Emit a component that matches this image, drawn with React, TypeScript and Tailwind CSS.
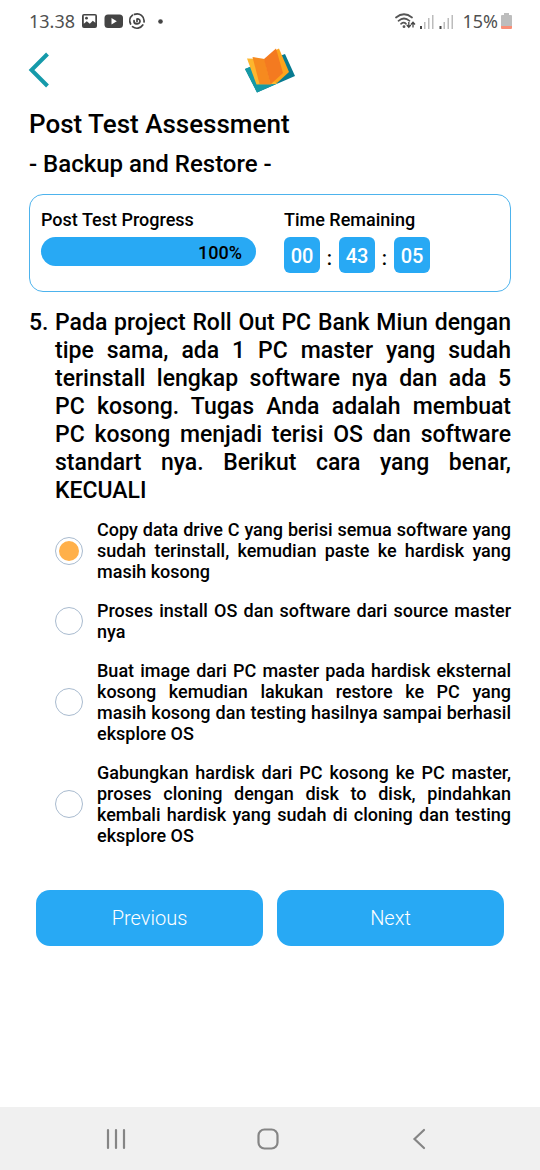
import { useState } from "react";

const options = [
  "Copy data drive C yang berisi semua software yang sudah terinstall, kemudian paste ke hardisk yang masih kosong",
  "Proses install OS dan software dari source master nya",
  "Buat image dari PC master pada hardisk eksternal kosong kemudian lakukan restore ke PC yang masih kosong dan testing hasilnya sampai berhasil eksplore OS",
  "Gabungkan hardisk dari PC kosong ke PC master, proses cloning dengan disk to disk, pindahkan kembali hardisk yang sudah di cloning dan testing eksplore OS",
];

function StatusBar() {
  return (
    <div className="flex h-10 items-center justify-between pt-px pl-[29px] pr-7 font-['Noto_Sans',sans-serif] text-lg leading-6 font-normal text-[#505050]">
      <div className="flex items-center">
        <span className="w-[51px]">13.38</span>
        <svg width="88" height="18" viewBox="0 0 88 18" aria-hidden="true">
          <path
            fillRule="evenodd"
            fill="#444"
            d="M4 2h11a2 2 0 0 1 2 2v10a2 2 0 0 1-2 2H4a2 2 0 0 1-2-2V4a2 2 0 0 1 2-2ZM3.800 3.600v8.200l3-2.500 3 2.500 3-3 2.500 2V3.600Z"
          />
          <circle cx="6.500" cy="6.200" r="1.400" fill="#444" />
          <rect x="24.500" y="2.500" width="18.500" height="13.500" rx="3.500" fill="#444" />
          <path d="M31.500 6v6.400l5.300-3.200Z" fill="#fff" />
          <g fill="none" stroke="#444" strokeWidth="1.700" strokeLinecap="round">
            <path d="M54.500 2.400A7 7 0 0 1 64 10" />
            <path d="M62.800 13A7 7 0 0 1 52.500 14.700" />
            <path d="M50.600 12A7 7 0 0 1 52.500 3.200" />
            <path d="M54 8.500a3 3 0 0 0 6 .8a2.300 2.300 0 0 0-3-2.200v2.600" />
          </g>
          <circle cx="80.500" cy="9.500" r="2.300" fill="#444" />
        </svg>
      </div>
      <div className="flex items-center gap-1">
        <svg width="60" height="20" viewBox="0 0 60 20" aria-hidden="true">
          <g fill="none" stroke="#555" strokeWidth="1.700" strokeLinecap="round">
            <path d="M2 6.500q8-6.500 16 0M4.500 9.800q5.500-4.600 11 0M7 12.800q2.800-2.200 5 0" />
          </g>
          <circle cx="10" cy="15.700" r="1.400" fill="#555" />
          <path
            d="M14.800 11v5m-2-2 2 2.200 2-2.200M19 16.500v-5m-2 2 2-2.200 2 2.200"
            fill="none"
            stroke="#444"
            strokeWidth="1.300"
          />
          <path d="M26 15h2v3h-2zM45.500 15h2v3h-2z" fill="#444" />
          <path
            d="M30 11h1.500v7H30zM34 7h1.500v11H34zM38 4h1.500v14H38zM49.500 11H51v7h-1.500zM53.500 7H55v11h-1.500zM57.500 4H59v14h-1.500z"
            fill="#bcbcbc"
          />
        </svg>
        <div className="flex items-center gap-[3px] pl-1">
          <span>15%</span>
          <svg width="11" height="18" viewBox="0 0 11 18" aria-hidden="true">
            <path d="M3 1h5v2h2q1 0 1 1v10H0V4q0-1 1-1h2Z" fill="#bdbdbd" />
            <path d="M0 14h11v2q0 1-1 1H1q-1 0-1-1Z" fill="#f98f77" />
          </svg>
        </div>
      </div>
    </div>
  );
}

function BookLogo() {
  return (
    <svg width="52" height="46" viewBox="0 0 52 46" role="img" aria-label="Open book">
      <path d="m1 22 12 23.500 38-16.500L41 7Z" fill="#087b91" />
      <path d="m1 22 12 23.500 20-9L10 18Z" fill="#1599a5" />
      <path d="m3 11.500 9.500 26 20.500-.5L20 12Z" fill="#fdb62e" />
      <path d="m30 4 5-2.500L45 25l-12 11-8-4Z" fill="#fda41c" />
      <path d="m8.500 10 12 2 6 25.500-11-.5Z" fill="#f68a1f" />
      <path d="m20 12 12-10.500L39 26 26.500 37.500Z" fill="#f47a20" />
    </svg>
  );
}

function TimeBox({ value }: { value: string }) {
  return (
    <span className="flex h-9 w-9 items-center justify-center rounded-md bg-[#28a9f4] pt-[2px] text-xl font-medium text-white">
      {value}
    </span>
  );
}

export default function App() {
  const [selected, setSelected] = useState(0);

  return (
    <div className="flex min-h-screen flex-col bg-white font-[Roboto,sans-serif] font-[480] text-black">
      <StatusBar />
      <header className="grid h-15 grid-cols-[1fr_auto_1fr] items-center px-7">
        <button type="button" aria-label="Back" className="w-6">
          <svg width="22" height="36" viewBox="0 0 22 36" aria-hidden="true">
            <path d="M19.500 2 3.500 18l16 16" fill="none" stroke="#159aaa" strokeWidth="4" />
          </svg>
        </button>
        <BookLogo />
      </header>

      <main className="px-[29px] pt-1">
        <h1 className="text-[26px] leading-10">Post Test Assessment</h1>
        <h2 className="text-2xl leading-10">- Backup and Restore -</h2>

        <section className="mt-[10px] grid grid-cols-2 gap-7 rounded-[14px] border border-[#4db3ed] px-[11px] pt-[13px] pb-[18px]">
          <div>
            <h3 className="text-lg leading-6">Post Test Progress</h3>
            <div
              role="progressbar"
              aria-label="Post Test Progress"
              aria-valuenow={100}
              className="mt-[5px] flex h-[29px] items-center justify-end rounded-full bg-[#28a9f4] pt-[2px] pr-[14px] text-lg"
            >
              100%
            </div>
          </div>
          <div>
            <h3 className="text-lg leading-6">Time Remaining</h3>
            <div className="mt-[5px] flex items-center text-xl">
              <TimeBox value="00" />
              <span className="w-[19px] pt-[6px] text-center">:</span>
              <TimeBox value="43" />
              <span className="w-[19px] pt-[6px] text-center">:</span>
              <TimeBox value="05" />
            </div>
          </div>
        </section>

        <form>
          <fieldset>
            <legend className="flex pt-[17px] text-[23px] leading-7">
              <span className="w-[26px] shrink-0">5.</span>
              <span className="text-justify">
                Pada project Roll Out PC Bank Miun dengan tipe sama, ada 1 PC master yang sudah
                terinstall lengkap software nya dan ada 5 PC&nbsp;kosong. Tugas Anda adalah membuat
                PC&nbsp;kosong menjadi terisi OS dan software standart nya. Berikut cara yang benar,
                KECUALI
              </span>
            </legend>
            <div className="mt-[14px] flex flex-col gap-[18px] pl-[26px]">
              {options.map((text, i) => (
                <label key={i} className="flex items-center gap-[14px] text-lg leading-[21px]">
                  <input
                    type="radio"
                    name="answer"
                    checked={selected === i}
                    onChange={() => setSelected(i)}
                    className="h-7 w-7 shrink-0 appearance-none rounded-full border border-[#a9bbcf] bg-white bg-clip-content p-[3px] checked:bg-[#ffb04a]"
                  />
                  <span className="text-justify">{text}</span>
                </label>
              ))}
            </div>
          </fieldset>
          <div className="mt-11 grid grid-cols-2 gap-[14px] px-[7px] text-xl font-light text-white">
            <button type="button" className="h-14 rounded-[14px] bg-[#28a9f4]">
              Previous
            </button>
            <button type="button" className="h-14 rounded-[14px] bg-[#28a9f4]">
              Next
            </button>
          </div>
        </form>
      </main>

      <nav className="mt-auto flex h-[63px] items-center justify-between bg-[#f0f0f0] pl-[104px] pr-[109px]">
        <button type="button" aria-label="Recent apps">
          <svg width="24" height="24" viewBox="0 0 24 24" aria-hidden="true">
            <path d="M4 3v18M12 3v18M20 3v18" stroke="#858585" strokeWidth="2.200" strokeLinecap="round" />
          </svg>
        </button>
        <button type="button" aria-label="Home">
          <svg width="24" height="24" viewBox="0 0 24 24" aria-hidden="true">
            <rect x="2.500" y="2.500" width="19" height="19" rx="6" fill="none" stroke="#858585" strokeWidth="2.200" />
          </svg>
        </button>
        <button type="button" aria-label="Back to previous app">
          <svg width="24" height="24" viewBox="0 0 24 24" aria-hidden="true">
            <path d="m17 3-9.500 9 9.500 9" fill="none" stroke="#858585" strokeWidth="2.200" strokeLinecap="round" />
          </svg>
        </button>
      </nav>
    </div>
  );
}
